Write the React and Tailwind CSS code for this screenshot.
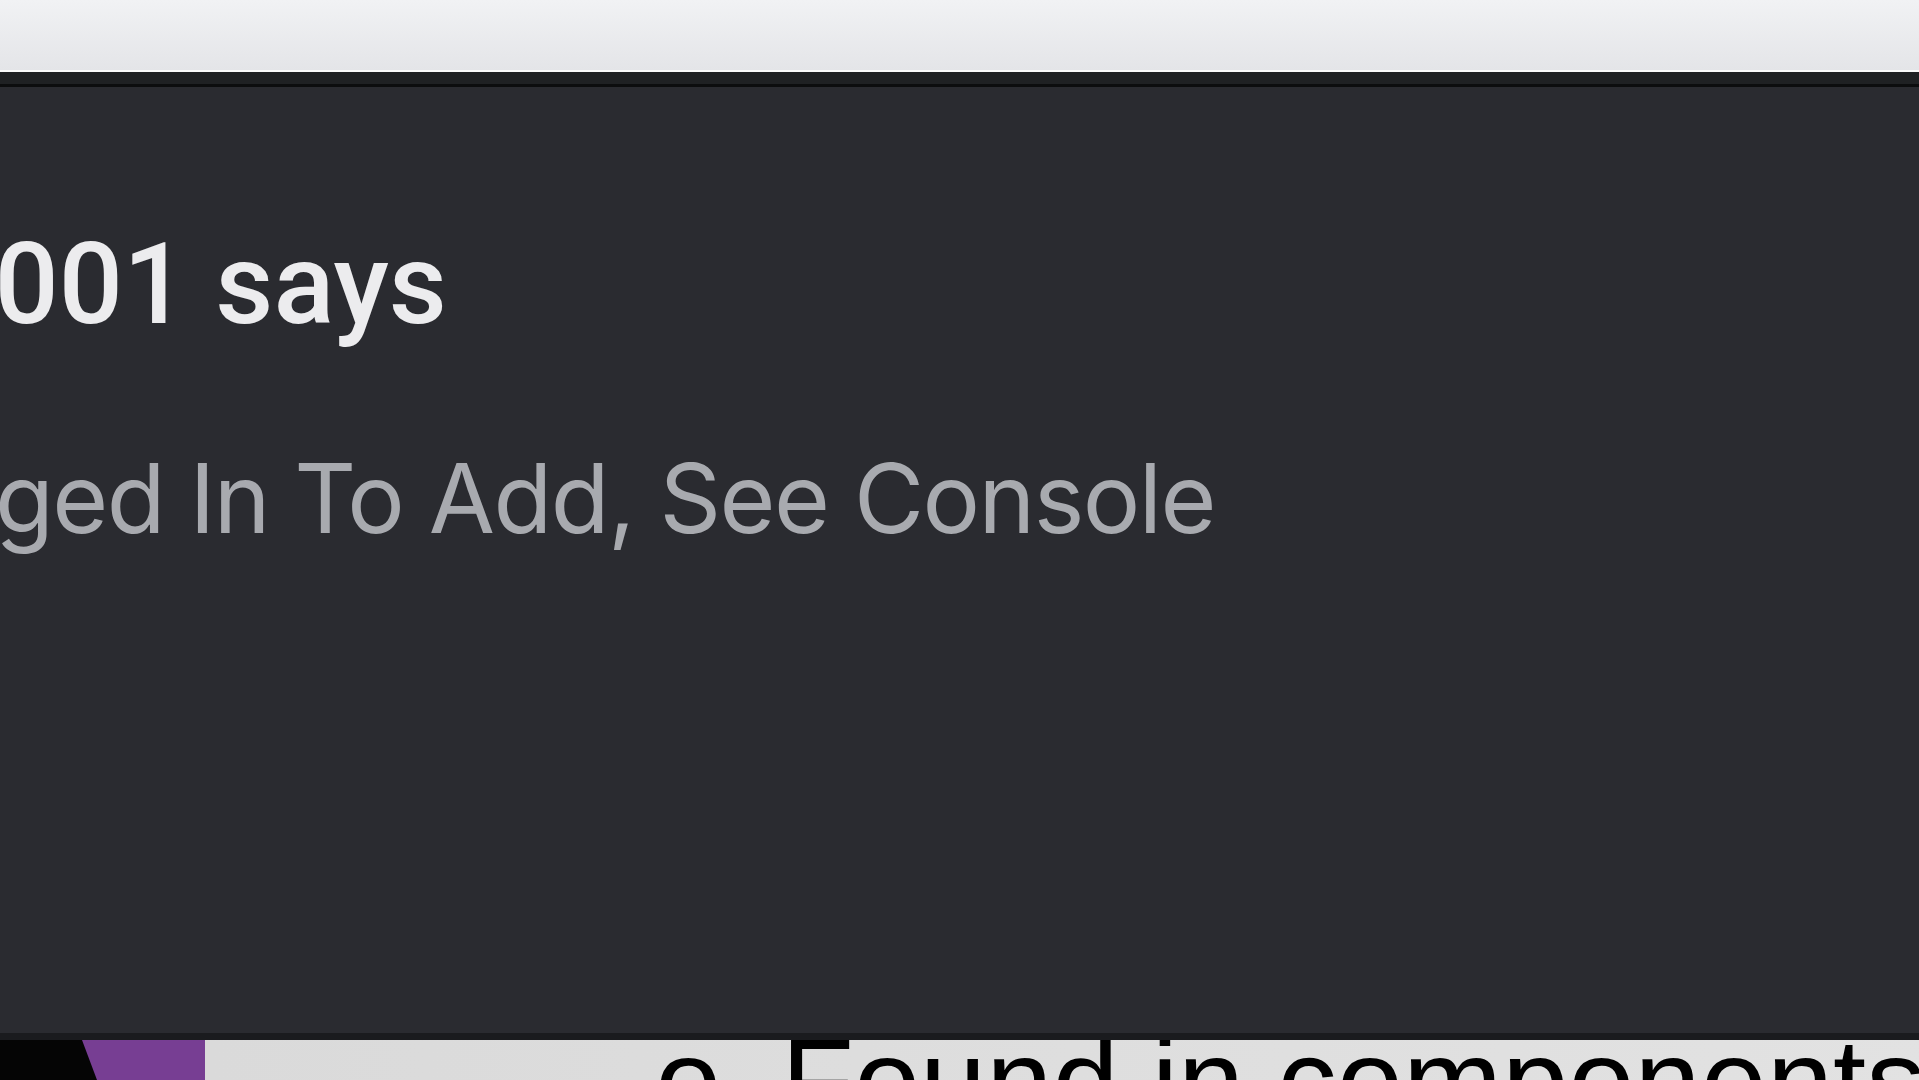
export default function App() {
  return (
    <div className="w-[1919px] h-[1080px] overflow-hidden flex flex-col bg-[#2a2b30]">
      <div className="h-[70px] shrink-0 bg-gradient-to-b from-[#f1f2f4] to-[#e4e5e8]" />
      <div className="h-[2px] shrink-0 bg-[#fafafa]" />
      <div className="h-[12px] shrink-0 bg-[#1f2123]" />
      <div className="h-[3px] shrink-0 bg-[#0c0d0e]" />
      <div className="flex-1 flex flex-col pt-[141px] bg-[#2a2b30]">
        <div className="w-[447px] flex justify-end whitespace-nowrap">
          <span className="[font-family:Roboto,Inter,sans-serif] text-[113px] leading-none font-medium text-[#ececee]">localhost:3001 says</span>
        </div>
        <div className="mt-[109px] w-[1215px] flex justify-end whitespace-nowrap">
          <span className="[font-family:Inter,'Liberation_Sans',sans-serif] text-[96px] leading-none tracking-[-0.016em] text-[#a8aaaf]">You Must Be Logged In To Add, See Console</span>
        </div>
      </div>
      <div className="h-[7px] shrink-0 bg-[#1a1b1e]" />
      <div className="h-[40px] shrink-0 flex overflow-hidden">
        <svg width="205" height="40" viewBox="0 0 205 40" className="shrink-0 block">
          <rect x="0" y="0" width="205" height="40" fill="#050505" />
          <polygon points="82,0 205,0 205,40 97,40" fill="#773e93" />
        </svg>
        <div className="flex-1 bg-gradient-to-r from-[#dadada] to-[#e2e2e2] flex items-start whitespace-nowrap [font-family:'Liberation_Sans',Arial,sans-serif] text-black">
          <div className="mt-[-19px] flex text-[119px] leading-none">
            <span className="ml-[450px]">o</span>
            <span className="ml-[60px]">Found in components</span>
          </div>
        </div>
      </div>
    </div>
  );
}
